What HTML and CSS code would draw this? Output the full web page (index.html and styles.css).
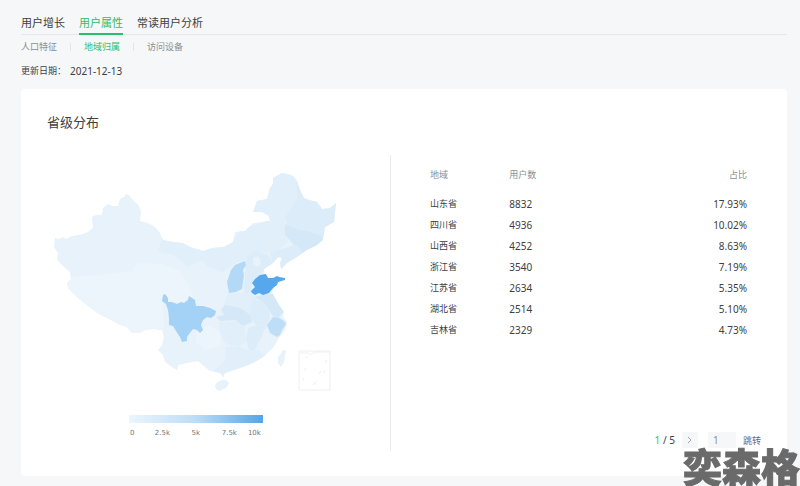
FILE: index.html
```html
<!DOCTYPE html>
<html lang="zh-CN">
<head>
<meta charset="utf-8">
<meta name="viewport" content="width=device-width, initial-scale=1">
<title>用户属性</title>
<link rel="stylesheet" href="styles.css">
</head>
<body>
<div class="page">
  <nav class="tabs">
    <a href="#growth">用户增长</a>
    <a href="#attributes" class="active">用户属性</a>
    <a href="#readers">常读用户分析</a>
  </nav>
  <nav class="subtabs">
    <a href="#people">人口特征</a>
    <a href="#region" class="active">地域归属</a>
    <a href="#device">访问设备</a>
  </nav>
  <p class="updated"><span>更新日期：</span><time datetime="2021-12-13">2021-12-13</time></p>

  <main class="card">
    <h1>省级分布</h1>
    <div class="content">
      <section class="map-panel">
        <svg class="map" viewBox="47 155 343 245" aria-hidden="true">
          <defs>
            <clipPath id="land">
              <path id="outline" d="M55 238L59 239L63 237L66 239L72 236L80 235L88 232L93 228L92 217L96 215L102 215L103 208L108 204L112 206L118 206L120 199L124 197L126 194L129 195L132 199L139 206L141 212L140 221L148 223L155 227L160 233L163 240L173 242L183 243L190 247L203 251L212 248L224 247L233 242L235 232L245 231L253 223L262 222L270 221L269 216L262 212L253 212L257 201L267 199L270 188L273 184L273 178L282 173L288 174L293 176L297 181L300 190L304 198L309 200L317 202L322 209L330 208L336 203L334 222L325 227L323 240L317 245L307 250L297 257L287 263L281 269L280 263L282 258L278 257L273 263L264 269L264 273L268 278L286 278L278 282L272 292L275 298L279 305L284 312L283 317L287 322L285 330L279 338L273 348L263 357L253 363L240 368L225 373L223 378L220 373L210 371L205 367L198 361L187 363L178 365L177 370L172 367L165 362L163 355L158 350L162 345L164 337L162 330L153 329L145 330L140 333L132 333L127 327L120 325L111 320L99 314L88 306L78 298L68 288L67 283L71 279L70 272L65 268L57 260L58 253L54 247Z"/>
            </clipPath>
          </defs>
          <g clip-path="url(#land)">
            <rect class="l2" x="50" y="165" width="295" height="230"/>
            <path class="l1" d="M60 278L95 275L132 271L137 263L162 264L178 270L192 282L197 300L188 297L183 303L169 302L163 295L164 340L60 340Z"/>
            <path class="l3" d="M163 236L200 249L234 240L240 230L275 218L280 236L289 240L278 251L263 253L250 258L238 262L222 272L208 267L202 260L188 267L174 255L158 252Z"/>
            <path class="l3" d="M250 195L270 170L297 176L297 199L291 208L285 217L286 240L270 226L250 216Z"/>
            <path class="l4" d="M297 181L306 187L340 200L336 230L323 236L308 231L297 229L287 225L285 217L291 208L297 199Z"/>
            <path class="l5" d="M285 224L297 229L308 231L323 236L323 248L302 254L296 247L285 235Z"/>
            <path class="l4" d="M270 253L282 249L296 244L303 253L281 272L273 265Z"/>
            <path class="l4" d="M246 257L255 251L268 255L273 263L264 270L259 276L252 282L251 292L244 294L245 275Z"/>
            <path class="l2" d="M253 258L259 256L261 264L257 267L253 264Z"/>
            <path class="l2" d="M205 267L214 277L210 289L219 301L210 307L197 306L190 287L183 277L188 269Z"/>
            <path class="l3" d="M228 293L252 293L259 305L253 315L239 309L224 306Z"/>
            <path class="l5" d="M221 309L225 305L240 308L251 315L252 322L243 326L235 320L220 321L216 317L224 315Z"/>
            <path class="l5" d="M254 297L266 294L274 294L284 311L278 319L272 315L267 307L264 303Z"/>
            <path class="l4" d="M252 299L263 302L269 310L270 318L266 327L255 324L250 315Z"/>
            <path class="l3" d="M219 322L236 321L245 327L246 342L238 347L225 343L220 334Z"/>
            <path class="l4" d="M248 328L257 325L266 327L261 338L257 345L254 352L249 350L246 339Z"/>
            <path class="l1" d="M197 329L210 326L220 332L222 345L205 350L196 342Z"/>
            <path class="l3" d="M225 347L239 347L248 350L260 351L267 356L245 369L222 374L214 371L226 359Z"/>
          </g>
          <path class="shanxi" d="M229 293L227 282L231 270L235 265L245 261L246 265L243 270L244 275L242 289L236 292Z"/>
          <path class="zhejiang" d="M267 325L273 317L279 318L284 321L286 324L282 330L280 335L277 337L270 333Z"/>
          <path class="sichuan" d="M163 295L165 294L168 298L168 302L172 302L177 304L181 302L184 303L188 300L189 296L195 300L196 306L203 306L210 308L216 311L215 315L211 318L207 317L203 320L201 325L203 330L200 333L197 330L193 329L189 334L187 337L187 341L182 342L180 337L176 331L173 326L169 325L169 318L168 310L166 304L162 301Z"/>
          <path class="shandong" d="M251 291L255 287L252 283L255 279L260 275L266 274L268 278L273 278L277 276L279 277L285 278L285 280L278 282L277 285L273 288L269 293L263 295L259 293L255 295L252 293Z"/>
          <path class="l2" d="M215 386L217 382L222 380L226 380L229 383L226 388L219 391L216 389Z"/>
          <path class="l2" d="M278 358L283 350L286 351L284 362L281 367L278 363Z"/>
          <g class="sea">
            <path d="M299 351H330V390H299Z"/>
            <path d="M300 353H308L310 355L315 352H330M305 358L308 357M305 368V371M303 378L304 381M317 381L313 385M319 374L321 371M324 370V373M326 360V363"/>
          </g>
        </svg>
        <div class="legend">
          <div class="scale"></div>
          <div class="ticks"><span>0</span><span>2.5k</span><span>5k</span><span>7.5k</span><span>10k</span></div>
        </div>
      </section>

      <section class="data-panel">
        <table>
          <thead><tr><th>地域</th><th>用户数</th><th>占比</th></tr></thead>
          <tbody>
            <tr><td>山东省</td><td>8832</td><td>17.93%</td></tr>
            <tr><td>四川省</td><td>4936</td><td>10.02%</td></tr>
            <tr><td>山西省</td><td>4252</td><td>8.63%</td></tr>
            <tr><td>浙江省</td><td>3540</td><td>7.19%</td></tr>
            <tr><td>江苏省</td><td>2634</td><td>5.35%</td></tr>
            <tr><td>湖北省</td><td>2514</td><td>5.10%</td></tr>
            <tr><td>吉林省</td><td>2329</td><td>4.73%</td></tr>
          </tbody>
        </table>
        <form class="pager">
          <span><b>1</b> / 5</span>
          <button type="button" class="next" aria-label="下一页">
            <svg viewBox="0 0 16 16"><path d="M6 5L9 8L6 11"/></svg>
          </button>
          <input type="text" value="1" aria-label="页码">
          <button type="button" class="jump">跳转</button>
        </form>
      </section>
    </div>
  </main>
</div>
<div class="watermark">奕森格</div>
</body>
</html>
```
FILE: styles.css
```css
* { box-sizing: border-box; }

body {
  margin: 0;
  background: #f5f7f9;
  color: #404040;
  font-family: "Noto Sans", "Noto Sans CJK SC", sans-serif;
  font-size: 10px;
}

a { color: inherit; text-decoration: none; }

.page { padding: 13px 13px 9px 21px; }

.tabs {
  display: flex;
  gap: 14px;
  border-bottom: 1px solid #e4e7e9;
  font-size: 11px;
  line-height: 20px;
}
.tabs a { margin-bottom: -1px; border-bottom: 2px solid transparent; }
.tabs .active { color: #2dbe6c; border-color: #2dbe6c; }

.subtabs {
  display: flex;
  padding-top: 4px;
  color: #8c8f92;
  font-size: 9px;
  line-height: 16px;
}
.subtabs a { display: flex; align-items: center; }
.subtabs a + a::before {
  content: "";
  height: 8px;
  margin: 0 13px;
  border-left: 1px solid #e4e7e9;
}
.subtabs .active { color: #2dbe6c; }

.updated {
  display: flex;
  gap: 4px;
  margin: 8px 0 10px;
  line-height: 16px;
}
.updated span { font-size: 9px; }

.card {
  padding: 24px 0 25px 26px;
  border-radius: 4px;
  background: #fff;
}

h1 {
  margin: 0 0 24px;
  font-size: 13px;
  font-weight: 400;
  line-height: 18px;
}

.content { display: grid; grid-template-columns: 344fr 396fr; }

.map-panel { padding-bottom: 13px; border-right: 1px solid #e9ebed; }
.map { display: block; width: 100%; }
.l1 { fill: #ecf5fc; }
.l2 { fill: #e7f2fb; }
.l3 { fill: #e1effa; }
.l4 { fill: #dcecf9; }
.l5 { fill: #d4e8f8; }
.shanxi { fill: #b4d9f7; }
.zhejiang { fill: #bedef7; }
.sichuan { fill: #a4d1f6; }
.shandong { fill: #56a7ec; }
.sea { fill: none; stroke: #eef0f1; }

.legend { width: 39%; margin: 15px 0 0 82px; }
.scale { height: 8px; background: linear-gradient(90deg, #ecf5fc, #bcdcf6 50%, #55a5e8); }
.ticks {
  display: grid;
  grid-template-columns: 1fr 2fr 2fr 2fr 1fr;
  padding-top: 5px;
  color: #777;
  font: 7px/10px "DejaVu Sans", sans-serif;
  text-align: center;
}
.ticks span:first-child { padding-left: 1px; text-align: left; }

.data-panel {
  display: flex;
  flex-direction: column;
  justify-content: space-between;
  padding: 8px 40px 3px 39px;
}

table { width: 100%; border-collapse: collapse; table-layout: fixed; }
th, td { height: 21px; padding: 0; text-align: left; font-weight: 400; }
th { height: 30px; padding-bottom: 8px; color: #8c8f92; font-size: 9px; }
th:first-child { width: 25%; }
td:first-child { font-size: 9px; }
th:last-child, td:last-child { text-align: right; }

.pager {
  display: flex;
  align-items: center;
  justify-content: flex-end;
  margin-right: -14px;
}
.pager b { color: #2dbe6c; font-weight: 400; }
.pager button, .pager input {
  height: 16px;
  padding: 0;
  border: 0;
  background: #f5f7f9;
  color: #8c8f92;
  font: inherit;
}
.pager .next { width: 16px; margin: 0 10px 0 7px; }
.next svg { display: block; fill: none; stroke: #a4a7ab; }
.pager input { width: 28px; padding-left: 5px; }
.pager .jump { margin-left: 7px; background: none; color: #576b95; font-size: 9px; }

.watermark {
  position: fixed;
  right: 0;
  bottom: 0;
  color: #6a6a6a;
  font: 900 39px/42px "Noto Sans CJK SC", sans-serif;
  -webkit-text-stroke: 1px #6a6a6a;
}
```
